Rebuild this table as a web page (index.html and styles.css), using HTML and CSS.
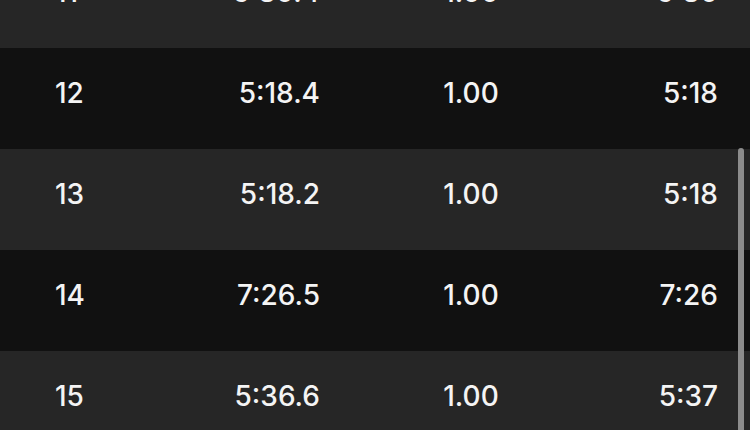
FILE: index.html
```html
<!DOCTYPE html>
<html>
<head>
<meta charset="utf-8">
<link rel="stylesheet" href="styles.css">
</head>
<body>
<div class="viewport">
  <div class="table">
    <div class="row light"><span class="c1">11</span><span class="c2">5:30.4</span><span class="c3">1.00</span><span class="c4">5:30</span></div>
    <div class="row dark"><span class="c1">12</span><span class="c2">5:18.4</span><span class="c3">1.00</span><span class="c4">5:18</span></div>
    <div class="row light"><span class="c1">13</span><span class="c2">5:18.2</span><span class="c3">1.00</span><span class="c4">5:18</span></div>
    <div class="row dark"><span class="c1">14</span><span class="c2">7:26.5</span><span class="c3">1.00</span><span class="c4">7:26</span></div>
    <div class="row light"><span class="c1">15</span><span class="c2">5:36.6</span><span class="c3">1.00</span><span class="c4">5:37</span></div>
  </div>
  <div class="scrollbar"></div>
</div>
</body>
</html>
```
FILE: styles.css
```css
html, body {
  margin: 0;
  padding: 0;
  background: #111111;
}
.viewport {
  position: relative;
  width: 750px;
  height: 430px;
  overflow: hidden;
}
.table {
  margin-top: -53px;
  display: flex;
  flex-direction: column;
}
.row {
  height: 101px;
  box-sizing: border-box;
  padding: 0 32px 12px 55px;
  display: grid;
  grid-template-columns: 120px 145px 302px 96px;
  align-items: center;
  font-family: "Inter", "Noto Sans", sans-serif;
  font-weight: 500;
  font-size: 28px;
  color: #f4f4f4;
}
.light { background: #262626; }
.dark { background: #111111; }
.c1 { text-align: left; }
.c2 { text-align: right; }
.c3 { text-align: center; }
.c4 { text-align: right; }
.scrollbar {
  position: absolute;
  left: 738px;
  top: 148px;
  width: 6px;
  height: 300px;
  border-radius: 3px;
  background: #8c8c8c;
}
```
